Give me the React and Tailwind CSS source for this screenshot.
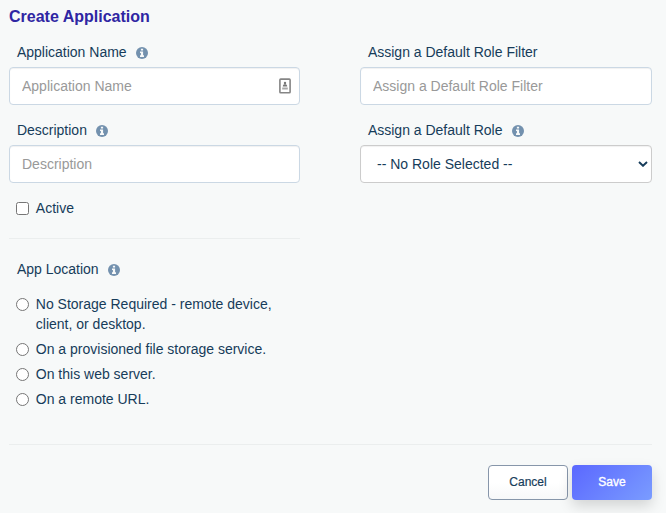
import React from "react";

function InfoIcon() {
  return (
    <svg viewBox="0 0 12 12" className="mt-[2px] ml-[9.5px] h-3 w-3 shrink-0">
      <circle cx="6" cy="6" r="6" fill="#7391ae" />
      <path d="M4.9 1.7h2.2v1.9H4.9zM4 4.5h3.1v3.8H8v1.6H4V8.3h.9V6.1H4z" fill="#f7f9f9" />
    </svg>
  );
}

function Label({ children, info }) {
  return (
    <div className="flex h-5 items-center pl-[7.9px] leading-5">
      <span>{children}</span>
      {info && <InfoIcon />}
    </div>
  );
}

function TextField({ placeholder, children }) {
  return (
    <div className="mt-[5px] flex h-[38px] items-center rounded border border-[#cbd8e4] bg-white pr-2 pl-3 shadow-[inset_0_1px_1px_rgba(0,0,0,0.06)]">
      <input
        type="text"
        placeholder={placeholder}
        className="h-5 min-w-0 flex-1 bg-transparent text-sm leading-5 outline-none placeholder:text-[#999999]"
      />
      {children}
    </div>
  );
}

function ContactIcon() {
  return (
    <svg viewBox="0 0 12 16" className="h-4 w-3 shrink-0" fill="none">
      <rect x="0.9" y="1.1" width="10.2" height="13.6" rx="0.8" fill="#fff" stroke="#858585" strokeWidth="1.6" />
      <circle cx="6" cy="5" r="1.2" fill="#777" />
      <path d="M3.8 8.6c0-1.7.9-2.3 2.2-2.3s2.2.6 2.2 2.3z" fill="#777" />
      <path d="M3.2 10.5h5.6" stroke="#a8a8a8" strokeWidth="2" />
    </svg>
  );
}

function Option({ children }) {
  return (
    <label className="flex items-start pl-[7px] leading-5">
      <input
        type="radio"
        name="location"
        className="mt-1 h-[13px] w-[13px] shrink-0 appearance-none rounded-full border border-[#767676] bg-white"
      />
      <span className="ml-[6.8px]">{children}</span>
    </label>
  );
}

export default function App() {
  return (
    <div className="h-[513px] w-[666px] overflow-hidden bg-[#f7f9f9] pr-[14px] pl-[9px] font-['Liberation_Sans',Arial,sans-serif] text-sm text-[#163c5a]">
      <h1 className="pt-[5px] text-base leading-6 font-bold text-[#2f26a3]">Create Application</h1>

      <div className="mt-[13px] flex h-[402px] gap-[60px]">
        <section className="w-[291px]">
          <Label info>Application Name</Label>
          <TextField placeholder="Application Name">
            <ContactIcon />
          </TextField>
          <div className="mt-[15px]">
            <Label info>Description</Label>
            <TextField placeholder="Description" />
          </div>
          <label className="mt-[15px] flex h-5 items-center pl-[7px] leading-5">
            <input
              type="checkbox"
              className="h-[13px] w-[13px] appearance-none rounded-[2.5px] border border-[#767676] bg-white"
            />
            <span className="ml-[6.8px]">Active</span>
          </label>
          <hr className="mt-5 border-[#ebeeee]" />
          <div className="mt-5">
            <Label info>App Location</Label>
          </div>
          <div className="mt-[15px] flex flex-col gap-[5px]">
            <Option>
              No Storage Required - remote device,
              <br />
              client, or desktop.
            </Option>
            <Option>On a provisioned file storage service.</Option>
            <Option>On this web server.</Option>
            <Option>On a remote URL.</Option>
          </div>
        </section>

        <section className="w-[292px]">
          <Label>Assign a Default Role Filter</Label>
          <TextField placeholder="Assign a Default Role Filter" />
          <div className="mt-[15px]">
            <Label info>Assign a Default Role</Label>
            <div className="mt-[5px] flex h-[38px] items-center justify-between rounded border border-[#cccccc] bg-white pr-[3px] pl-4 shadow-[inset_0_1px_1px_rgba(0,0,0,0.06)]">
              <span>-- No Role Selected --</span>
              <svg viewBox="0 0 10 6" className="h-[6px] w-[10px]" fill="none">
                <path d="M1 1l4 3.8L9 1" stroke="#163c5a" strokeWidth="1.9" />
              </svg>
            </div>
          </div>
        </section>
      </div>

      <hr className="border-[#ebeeee]" />
      <div className="mt-5 flex justify-end gap-1 text-xs">
        <button className="h-[35px] w-20 rounded border border-[#8796aa] bg-linear-to-b from-white from-50% to-[#f7f8f9] pb-[2px] [-webkit-text-stroke:0.2px_currentColor]">
          Cancel
        </button>
        <button className="h-[35px] w-20 rounded bg-[linear-gradient(135deg,#5b68ff,#7a9cff)] pb-[2px] text-white shadow-[0_6px_14px_rgba(0,0,0,0.15)] [-webkit-text-stroke:0.35px_currentColor]">
          Save
        </button>
      </div>
    </div>
  );
}
